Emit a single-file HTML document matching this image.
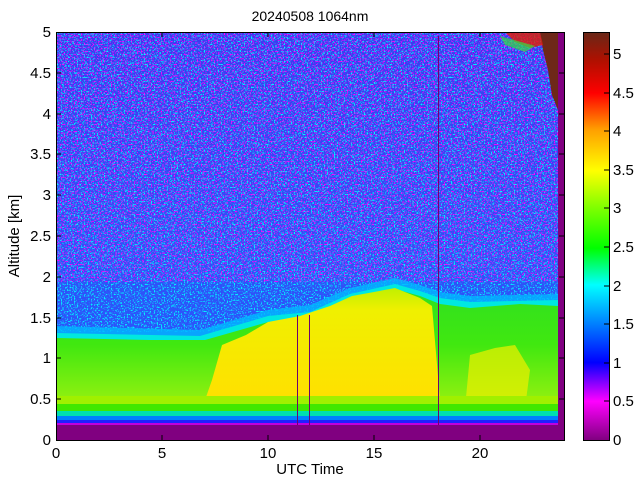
<!DOCTYPE html>
<html><head><meta charset="utf-8"><style>
html,body{margin:0;padding:0;background:#fff;}
body{width:640px;height:480px;overflow:hidden;font-family:"Liberation Sans",sans-serif;}
</style></head><body>
<svg width="640" height="480" viewBox="0 0 640 480" xmlns="http://www.w3.org/2000/svg" font-family="Liberation Sans, sans-serif">
<defs>
<filter id="nm" x="0" y="0" width="100%" height="100%">
<feTurbulence type="fractalNoise" baseFrequency="0.7" numOctaves="1" seed="5"/>
<feColorMatrix type="matrix" values="0 0 0 0 1  0 0 0 0 0  0 0 0 0 1  8 0 0 0 -4.4"/>
</filter>
<filter id="nc" x="0" y="0" width="100%" height="100%">
<feTurbulence type="fractalNoise" baseFrequency="0.7" numOctaves="1" seed="11"/>
<feColorMatrix type="matrix" values="0 0 0 0 0  0 0 0 0 0.9  0 0 0 0 1  0 8 0 0 -4.3"/>
</filter>
<linearGradient id="cb" x1="0" y1="1" x2="0" y2="0">
<stop offset="0" stop-color="#800080"/>
<stop offset="0.095" stop-color="#ff00ff"/>
<stop offset="0.19" stop-color="#0000ff"/>
<stop offset="0.285" stop-color="#0080ff"/>
<stop offset="0.38" stop-color="#00ffff"/>
<stop offset="0.47" stop-color="#00ff00"/>
<stop offset="0.57" stop-color="#80ff00"/>
<stop offset="0.66" stop-color="#ffff00"/>
<stop offset="0.76" stop-color="#ffa000"/>
<stop offset="0.85" stop-color="#ff0000"/>
<stop offset="0.93" stop-color="#b01000"/>
<stop offset="1" stop-color="#682818"/>
</linearGradient>
<linearGradient id="up" x1="0" y1="0" x2="0" y2="1">
<stop offset="0" stop-color="#3a3af0"/>
<stop offset="0.6" stop-color="#3050f8"/>
<stop offset="1" stop-color="#2060ff"/>
</linearGradient>
<linearGradient id="gl" x1="0" y1="0" x2="0" y2="1">
<stop offset="0" stop-color="#30e020"/>
<stop offset="0.5" stop-color="#40e810"/>
<stop offset="1" stop-color="#90f010"/>
</linearGradient>
<linearGradient id="yl" x1="0" y1="0" x2="0" y2="1">
<stop offset="0" stop-color="#c0f000"/>
<stop offset="0.2" stop-color="#f0f000"/>
<stop offset="1" stop-color="#ffe000"/>
</linearGradient>
</defs>
<rect x="56" y="32" width="508" height="408" fill="url(#up)"/>
<rect x="56" y="32" width="502" height="300" filter="url(#nc)"/>
<rect x="56" y="32" width="502" height="250" filter="url(#nm)"/>
<polygon fill="#00b8ff" opacity="0.8" points="56,326 200,330 268,310 310,305 350,288 395,278 420,285 440,292 470,296 558,294 558,400 56,400"/>
<polygon fill="#00e8e0" points="56,333 200,336 268,316 310,312 350,294 395,284 420,291 440,298 470,302 558,300 558,400 56,400"/>
<polygon fill="url(#gl)" points="56,338 150,340 205,340 268,322 310,318 350,298 395,289 420,296 440,304 470,308 520,304 558,306 558,400 56,400"/>
<polygon fill="url(#yl)" points="205,400 212,380 222,345 246,335 268,322 300,316 330,306 352,296 374,292 395,288 420,298 432,306 440,400"/>
<polygon fill="#f0f000" opacity="0.7" points="465,408 470,355 495,348 515,345 530,370 525,408"/>
<rect x="56" y="396" width="502" height="10" fill="#a0f000"/>
<rect x="56" y="404" width="502" height="7" fill="#40e800"/>
<rect x="56" y="411" width="502" height="5" fill="#00e0b0"/>
<rect x="56" y="416" width="502" height="4" fill="#0080ff"/>
<rect x="56" y="420" width="502" height="3" fill="#2020ff"/>
<rect x="56" y="423" width="502" height="2" fill="#c000e0"/>
<rect x="56" y="425" width="508" height="15" fill="#800080"/>
<rect x="558" y="32" width="6" height="393" fill="#800080"/>
<polygon fill="#6e2818" points="540,32 558,32 558,110 552,95 548,70 543,50"/>
<polygon fill="#e02000" opacity="0.8" points="505,32 540,32 543,45 530,48 515,42"/>
<polygon fill="#30e040" opacity="0.7" points="500,36 535,46 525,52 505,45"/>
<line x1="297.5" y1="315" x2="297.5" y2="425" stroke="#700070"/>
<line x1="309.5" y1="315" x2="309.5" y2="425" stroke="#700070"/>
<line x1="438.5" y1="36" x2="438.5" y2="425" stroke="#700070"/>
<rect x="56.5" y="32.5" width="508" height="408" fill="none" stroke="#000"/>
<g stroke="#000">
<line x1="162" y1="440" x2="162" y2="435"/><line x1="268" y1="440" x2="268" y2="435"/>
<line x1="374" y1="440" x2="374" y2="435"/><line x1="480" y1="440" x2="480" y2="435"/>
<line x1="162" y1="32" x2="162" y2="37"/><line x1="268" y1="32" x2="268" y2="37"/>
<line x1="374" y1="32" x2="374" y2="37"/><line x1="480" y1="32" x2="480" y2="37"/>
<line x1="56" y1="399" x2="61" y2="399"/><line x1="56" y1="358" x2="61" y2="358"/>
<line x1="56" y1="318" x2="61" y2="318"/><line x1="56" y1="277" x2="61" y2="277"/>
<line x1="56" y1="236" x2="61" y2="236"/><line x1="56" y1="195" x2="61" y2="195"/>
<line x1="56" y1="154" x2="61" y2="154"/><line x1="56" y1="114" x2="61" y2="114"/>
<line x1="56" y1="73" x2="61" y2="73"/>
<line x1="564" y1="399" x2="559" y2="399"/><line x1="564" y1="358" x2="559" y2="358"/>
<line x1="564" y1="318" x2="559" y2="318"/><line x1="564" y1="277" x2="559" y2="277"/>
<line x1="564" y1="236" x2="559" y2="236"/><line x1="564" y1="195" x2="559" y2="195"/>
<line x1="564" y1="154" x2="559" y2="154"/><line x1="564" y1="114" x2="559" y2="114"/>
<line x1="564" y1="73" x2="559" y2="73"/>
</g>
<g font-size="15" text-anchor="middle" fill="#000">
<text x="56" y="458">0</text><text x="162" y="458">5</text><text x="268" y="458">10</text>
<text x="374" y="458">15</text><text x="480" y="458">20</text>
<text x="310" y="474">UTC Time</text>
<text x="310" y="21" font-size="14">20240508 1064nm</text>
</g>
<g font-size="15" text-anchor="end" fill="#000">
<text x="51" y="445">0</text><text x="51" y="404">0.5</text><text x="51" y="363">1</text>
<text x="51" y="323">1.5</text><text x="51" y="282">2</text><text x="51" y="241">2.5</text>
<text x="51" y="200">3</text><text x="51" y="159">3.5</text><text x="51" y="119">4</text>
<text x="51" y="78">4.5</text><text x="51" y="37">5</text>
</g>
<text transform="translate(19,236) rotate(-90)" font-size="15" text-anchor="middle">Altitude [km]</text>
<rect x="583" y="32" width="26" height="408" fill="url(#cb)"/>
<rect x="583.5" y="32.5" width="26" height="408" fill="none" stroke="#000"/>
<g stroke="#000"><line x1="604" y1="401" x2="609" y2="401"/><line x1="604" y1="363" x2="609" y2="363"/><line x1="604" y1="324" x2="609" y2="324"/><line x1="604" y1="286" x2="609" y2="286"/><line x1="604" y1="247" x2="609" y2="247"/><line x1="604" y1="208" x2="609" y2="208"/><line x1="604" y1="170" x2="609" y2="170"/><line x1="604" y1="131" x2="609" y2="131"/><line x1="604" y1="93" x2="609" y2="93"/><line x1="604" y1="54" x2="609" y2="54"/></g>
<g font-size="15" fill="#000">
<text x="613" y="445">0</text><text x="613" y="406">0.5</text><text x="613" y="368">1</text>
<text x="613" y="329">1.5</text><text x="613" y="291">2</text><text x="613" y="252">2.5</text>
<text x="613" y="213">3</text><text x="613" y="175">3.5</text><text x="613" y="136">4</text>
<text x="613" y="98">4.5</text><text x="613" y="59">5</text>
</g>
</svg>
</body></html>
